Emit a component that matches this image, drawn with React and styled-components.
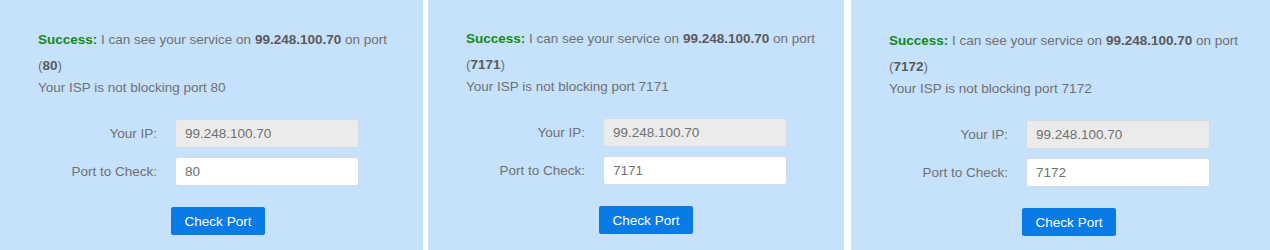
import React from "react";
import styled, { createGlobalStyle } from "styled-components";

const Global = createGlobalStyle`
  html, body { margin: 0; padding: 0; background: #ffffff; }
  body { font-family: "Liberation Sans", Arial, sans-serif; }
`;

const Strip = styled.div`
  display: flex;
  width: 1270px;
  height: 250px;
  background: #ffffff;
  overflow: hidden;
`;

const Panel = styled.section`
  box-sizing: border-box;
  width: ${(p) => p.$w}px;
  margin-left: ${(p) => p.$gap}px;
  height: 250px;
  flex: none;
  background: #c6e1fc;
  padding: ${(p) => p.$top}px 0 0 38px;
  font-size: 13.5px;
  color: #707070;
`;

const Message = styled.p`
  margin: 0;
  width: 362px;
  line-height: 26px;
`;

const Good = styled.strong`
  color: #138a13;
  font-weight: bold;
`;

const Strong = styled.strong`
  color: #5a5a5a;
  font-weight: bold;
`;

const Note = styled.p`
  margin: 0;
  line-height: 18px;
`;

const Form = styled.form`
  margin: 22px 0 0 0;
  display: grid;
  grid-template-columns: 119px 184px;
  column-gap: 18px;
  row-gap: 9px;
  align-items: center;
`;

const Label = styled.label`
  text-align: right;
  color: #707070;
`;

const Field = styled.input`
  box-sizing: border-box;
  height: 29px;
  width: 184px;
  border: 1px solid #d3dbe3;
  border-radius: 3px;
  padding: 0 9px;
  font: inherit;
  font-size: 13.5px;
  color: #707070;
  background: ${(p) => (p.readOnly ? "#ebebeb" : "#ffffff")};
  outline: none;
`;

const Button = styled.button`
  margin: 21px 0 0 133px;
  box-sizing: border-box;
  width: 94px;
  height: 28px;
  border: none;
  border-radius: 2px;
  background: #0a7ae6;
  color: #ffffff;
  font-family: "Liberation Sans", Arial, sans-serif;
  font-size: 13.5px;
  padding: 0;
  cursor: pointer;
`;

const panels = [
  { port: "80", w: 423, gap: 0, top: 27 },
  { port: "7171", w: 416, gap: 5, top: 26 },
  { port: "7172", w: 419, gap: 7, top: 28 },
];

const ip = "99.248.100.70";

function PortPanel({ port, w, gap, top }) {
  return (
    <Panel $w={w} $gap={gap} $top={top}>
      <Message>
        <Good>Success:</Good> I can see your service on <Strong>{ip}</Strong> on port ({""}
        <Strong>{port}</Strong>)
      </Message>
      <Note>Your ISP is not blocking port {port}</Note>
      <Form onSubmit={(e) => e.preventDefault()}>
        <Label>Your IP:</Label>
        <Field readOnly defaultValue={ip} />
        <Label>Port to Check:</Label>
        <Field defaultValue={port} />
      </Form>
      <Button type="button">Check Port</Button>
    </Panel>
  );
}

export default function App() {
  return (
    <>
      <Global />
      <Strip>
        {panels.map((p) => (
          <PortPanel key={p.port} {...p} />
        ))}
      </Strip>
    </>
  );
}
